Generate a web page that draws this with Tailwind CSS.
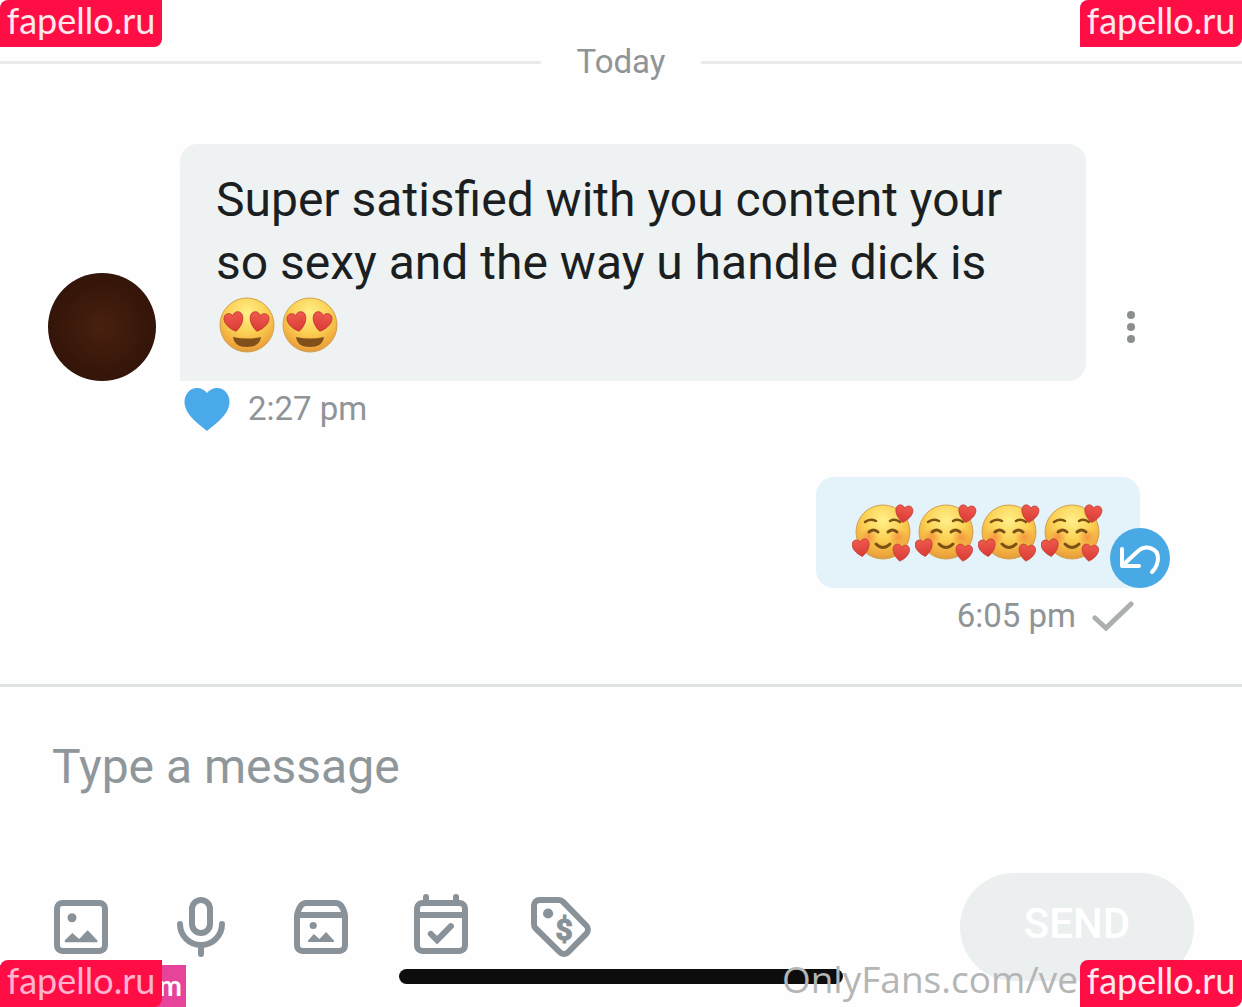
<!DOCTYPE html>
<html lang="en">

<head>
    <meta charset="UTF-8">
    <meta name="viewport" content="width=device-width, initial-scale=1.0">
    <title>Messages</title>
    <script src="https://cdn.jsdelivr.net/npm/@tailwindcss/browser@4"></script>
</head>

<body class="bg-[#fefefe] font-['Roboto',sans-serif] text-[#8f9496]">
    <!-- shared emoji shapes -->
    <svg class="absolute size-0" aria-hidden="true">
        <defs>
            <radialGradient id="face" cx="50%" cy="28%" r="75%">
                <stop offset="0" stop-color="#fff08a" />
                <stop offset="0.5" stop-color="#fbd052" />
                <stop offset="0.85" stop-color="#efa63c" />
                <stop offset="1" stop-color="#d9973c" />
            </radialGradient>
            <radialGradient id="blush">
                <stop offset="0" stop-color="#f58a3c" stop-opacity="0.8" />
                <stop offset="1" stop-color="#f58a3c" stop-opacity="0" />
            </radialGradient>
            <linearGradient id="red" x1="0" y1="0" x2="0" y2="1">
                <stop offset="0" stop-color="#ef5a4e" />
                <stop offset="1" stop-color="#d93a34" />
            </linearGradient>
            <path id="heart" d="M0 10C-5 7-9 2-9-3c0-3 2-5 4.500-5C-2.500-8-.8-7 0-5c.8-2 2.500-3 4.500-3C7-8 9-6 9-3c0 5-4 10-9 13z" fill="url(#red)" stroke="#b8322c" stroke-width="0.700" />
            <symbol id="heart-eyes" viewBox="0 0 63 63">
                <circle cx="31" cy="31" r="27" fill="url(#face)" stroke="#d2a050" stroke-width="1" />
                <use href="#heart" transform="translate(18 27) rotate(-12) scale(1.05)" />
                <use href="#heart" transform="translate(43 27) rotate(12) scale(1.05)" />
                <path d="M17 43q14 3 28 0c-1 7-6 10-14 10s-13-3-14-10z" fill="#81501a" />
            </symbol>
            <symbol id="smile-hearts" viewBox="0 0 63 63">
                <circle cx="31" cy="31" r="27" fill="url(#face)" stroke="#d2a050" stroke-width="1" />
                <circle cx="17" cy="36" r="9" fill="url(#blush)" />
                <circle cx="46" cy="36" r="9" fill="url(#blush)" />
                <g fill="none" stroke="#7c5214" stroke-width="2.500" stroke-linecap="round">
                    <path d="M13 21q5-4 11-1M38 20q5-3 10 1" />
                    <path d="M17 31q5-4 9 0M36 31q5-4 9 0" stroke-width="3" />
                    <path d="M24 43q7 7 14 0" stroke-width="3" />
                </g>
                <use href="#heart" transform="translate(52 12) rotate(8) scale(.95)" />
                <use href="#heart" transform="translate(9 46) rotate(-8) scale(.95)" />
                <use href="#heart" transform="translate(49 51) rotate(8) scale(.92)" />
            </symbol>
        </defs>
    </svg>

    <div class="relative min-h-screen flex flex-col overflow-hidden">
        <div class="flex items-center gap-9 pt-10">
            <div class="flex-1 h-[3px] bg-[#e9ebeb]"></div>
            <h1 class="text-[33px] leading-[44px]">Today</h1>
            <div class="flex-1 h-[3px] bg-[#e9ebeb]"></div>
        </div>

        <main class="mt-15">
            <article>
                <div class="flex items-end pl-12 pr-[90px]">
                    <div class="size-[108px] shrink-0 rounded-full bg-radial from-[#48200f] to-[#2b1006]"></div>
                    <div class="ml-6 flex-1 rounded-[18px] rounded-bl-none bg-[#eef2f2] px-9 py-6 text-[48px] leading-[63px] text-[#1b1f21]">
                        <p>Super satisfied with you content your so sexy and the way u handle dick is
                            <span class="flex" role="img" aria-label="Two heart-eyes faces">
                                <svg class="size-[63px]"><use href="#heart-eyes" /></svg>
                                <svg class="size-[63px]"><use href="#heart-eyes" /></svg>
                            </span>
                        </p>
                    </div>
                    <button class="ml-6 mb-[18px] flex h-[72px] w-[42px] flex-col items-center justify-center gap-1" aria-label="Message options">
                        <span class="size-2 rounded-full bg-[#8b8f90]"></span>
                        <span class="size-2 rounded-full bg-[#8b8f90]"></span>
                        <span class="size-2 rounded-full bg-[#8b8f90]"></span>
                    </button>
                </div>
                <div class="flex h-14 items-center gap-4 pl-[182px]">
                    <button aria-label="Unlike">
                        <svg class="size-[50px]" viewBox="0 0 50 50" fill="#49a9e9">
                            <path d="M25 47C21 43 2.500 32 2.500 18 2.500 10 8 4 15 4c4 0 8 2 10 5 2-3 6-5 10-5 7 0 12.500 6 12.500 14 0 14-18.500 25-22.500 29z" />
                        </svg>
                    </button>
                    <time class="text-[33px] leading-[44px]">2:27 pm</time>
                </div>
            </article>

            <article class="mt-10 flex flex-col items-end pr-[102px]">
                <div class="relative rounded-[18px] rounded-br-none bg-[#e4f3fa] px-9 py-6">
                    <p class="flex" role="img" aria-label="Four smiling faces with hearts">
                        <svg class="size-[63px]"><use href="#smile-hearts" /></svg>
                        <svg class="size-[63px]"><use href="#smile-hearts" /></svg>
                        <svg class="size-[63px]"><use href="#smile-hearts" /></svg>
                        <svg class="size-[63px]"><use href="#smile-hearts" /></svg>
                    </p>
                    <button class="absolute bottom-0 -right-[30px] size-[60px] rounded-full bg-[#49a9e5]" aria-label="Unsend">
                        <svg viewBox="0 0 60 60" fill="none" stroke="#fff" stroke-width="4" stroke-linecap="round" stroke-linejoin="round">
                            <path d="M12 21v17h17M12 38l15-14c9-9 21-3 21 6 0 5-2 10-6 14" />
                        </svg>
                    </button>
                </div>
                <div class="flex h-14 items-center gap-4 pr-1">
                    <time class="text-[33px] leading-[44px]">6:05 pm</time>
                    <svg class="h-8 w-11" viewBox="0 0 44 32" fill="none" stroke="#abafb0" stroke-width="5" stroke-linecap="round">
                        <path d="M3 18l11 10L39 4" />
                    </svg>
                </div>
            </article>
        </main>

        <form class="mt-10 border-t-3 border-[#e0e3e3] pt-12" onsubmit="return false">
            <input type="text" placeholder="Type a message" aria-label="Type a message" class="block h-16 w-full px-[52px] text-[48px] text-[#1b1f21] outline-none placeholder:text-[#8f979b]">
            <div class="mt-[74px] flex items-center justify-between pl-[45px] pr-12 pb-[26px]">
                <div class="flex gap-12 text-[#8a9299]">
                    <button type="button" aria-label="Add photo">
                        <svg class="size-[72px]" viewBox="0 0 24 24" fill="none" stroke="currentColor" stroke-width="2">
                            <rect x="4" y="4" width="16" height="16" rx="1.800" />
                            <g fill="currentColor" stroke="none">
                                <circle cx="9" cy="8.900" r="1.500" />
                                <path d="M6.700 16.300L9.100 14l2.300 2 2.800-2.900 3.200 3.300c.3.300 0 .7-.3.700H7c-.4 0-.6-.5-.3-.8z" />
                            </g>
                        </svg>
                    </button>
                    <button type="button" aria-label="Record voice message">
                        <svg class="size-[72px]" viewBox="0 0 24 24" fill="none" stroke="currentColor" stroke-width="2" stroke-linecap="round">
                            <rect x="9" y="3" width="6" height="11" rx="3" />
                            <path d="M5 11a7 7 0 0 0 14 0M12 18v3" />
                        </svg>
                    </button>
                    <button type="button" aria-label="Add from vault">
                        <svg class="size-[72px]" viewBox="0 0 24 24" fill="none" stroke="currentColor" stroke-width="2" stroke-linejoin="round">
                            <path d="M4 8h16v10.200a1.800 1.800 0 0 1-1.800 1.800H5.800A1.800 1.800 0 0 1 4 18.200zM4 8c.6-2.500 1.400-4 3-4h10c1.600 0 2.400 1.500 3 4" />
                            <g fill="currentColor" stroke="none">
                                <circle cx="9.400" cy="11.500" r="1.200" />
                                <path d="M7.700 16.500l1.900-2.200 1.900 1.700 2.200-2.300 2.600 2.800c.3.300 0 .5-.3.500H8c-.3 0-.5-.2-.3-.5z" />
                            </g>
                        </svg>
                    </button>
                    <button type="button" aria-label="Schedule message">
                        <svg class="size-[72px]" viewBox="0 0 24 24" fill="none" stroke="currentColor" stroke-width="2" stroke-linecap="round">
                            <rect x="4" y="4" width="16" height="16" rx="1.800" />
                            <path d="M7 2v2M17 2v2M4 8h16M8.600 14.300l2.100 2.100 4.600-4.700" />
                        </svg>
                    </button>
                    <button type="button" aria-label="Set price">
                        <svg class="size-[72px]" viewBox="0 0 24 24" fill="none" stroke="currentColor" stroke-width="2">
                            <path d="M4.800 3h6.500a2 2 0 0 1 1.400.6l7.700 7.900a2 2 0 0 1 0 2.800l-6 6.100a2 2 0 0 1-2.800 0l-8-7.900a2 2 0 0 1-.6-1.400V4.800A1.800 1.800 0 0 1 4.800 3z" />
                            <circle cx="7.700" cy="7.500" r="1.700" fill="currentColor" stroke="none" />
                            <text x="13" y="16.400" text-anchor="middle" font-size="10" font-weight="700" fill="currentColor" stroke="currentColor" stroke-width="0.400">$</text>
                        </svg>
                    </button>
                </div>
                <button type="submit" class="h-[108px] w-[234px] rounded-full bg-[#ebefef] pb-2 text-[42px] font-medium text-white">SEND</button>
            </div>
        </form>

        <!-- home indicator -->
        <div class="absolute bottom-[23px] left-1/2 h-[15px] w-[444px] -translate-x-1/2 rounded-full bg-[#0d0d0d]"></div>

        <!-- watermarks -->
        <div class="absolute bottom-0 right-[164px] font-['Open_Sans',sans-serif] text-[37px] leading-[56px] text-[#b4b6b6]">OnlyFans.com/ve</div>
        <div class="absolute bottom-0 left-0 h-[42px] w-[186px] bg-[#e8439a] pr-1 text-right font-['Lato',sans-serif] text-[28px] font-bold leading-[40px] text-white">m</div>
        <div class="absolute top-0 left-0 h-[47px] w-[162px] rounded-tl-lg rounded-br-lg bg-[#ff0d45] text-center font-['Lato',sans-serif] text-[36px] leading-[41px] text-[#ffe9ef]">fapello.ru</div>
        <div class="absolute top-0 right-0 h-[47px] w-[162px] rounded-tl-lg rounded-br-lg bg-[#ff0d45] text-center font-['Lato',sans-serif] text-[36px] leading-[41px] text-[#ffe9ef]">fapello.ru</div>
        <div class="absolute bottom-0 left-0 h-[47px] w-[162px] rounded-tl-lg rounded-br-lg bg-[#ff0d45] text-center font-['Lato',sans-serif] text-[36px] leading-[41px] text-[#ffb3cf]">fapello.ru</div>
        <div class="absolute bottom-0 right-0 h-[47px] w-[162px] rounded-tl-lg rounded-br-lg bg-[#ff0d45] text-center font-['Lato',sans-serif] text-[36px] leading-[41px] text-[#ffe9ef]">fapello.ru</div>
    </div>
</body>

</html>
